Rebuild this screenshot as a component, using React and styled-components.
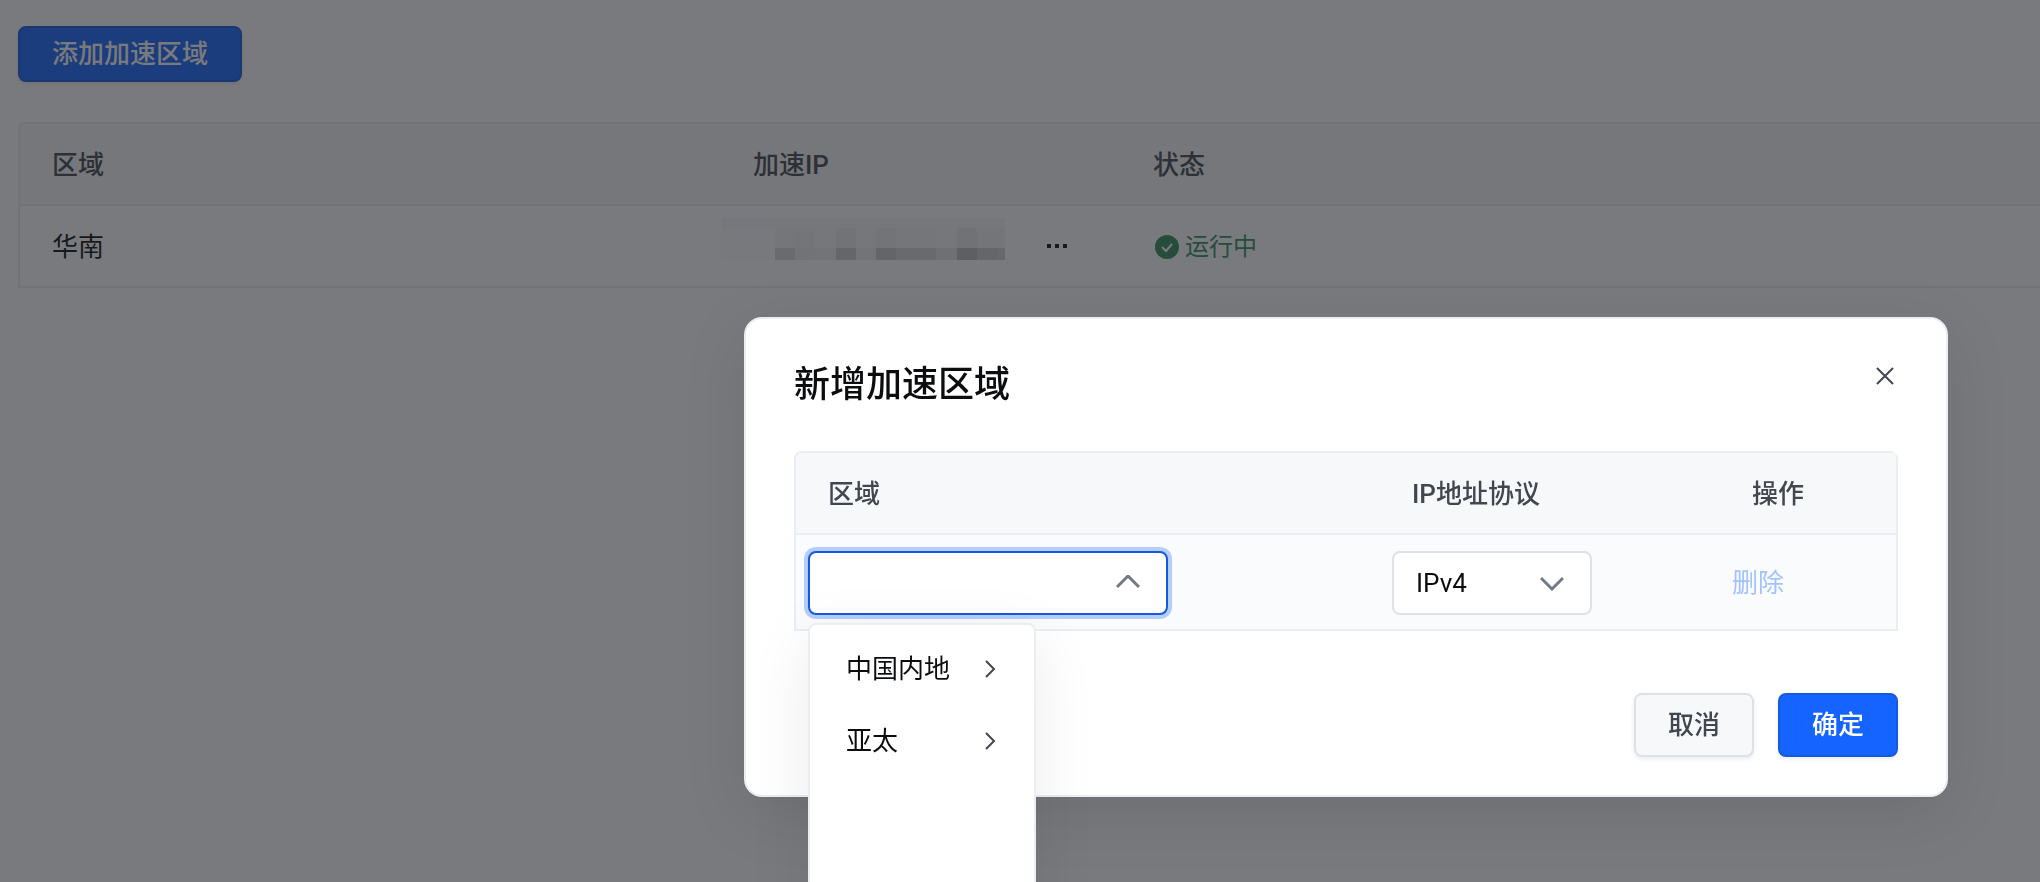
import React from 'react'
import styled, { createGlobalStyle, css } from 'styled-components'

const regions = ['中国内地', '亚太']

// tiles hiding the address, one list of colours for each row
const maskRows = [
  { height: 10, tiles: ['f7f8fc', 'f6f7fb', 'f6f7fb', 'f6f7fb', 'f6f7fb', 'f6f7fb', 'f6f7fb', 'f6f7fb', 'f6f7fb', 'f6f7fb', 'f6f7fb', 'f6f7fb', 'f6f7fb'] },
  { height: 20, tiles: ['fdfdfd', 'f4f4f4', 'f3f3f3', 'f8f8f8', 'eee', 'f8f8f8', 'f0f0f0', 'f5f5f5', 'f5f5f5', 'f7f7f7', 'ebebeb', 'f3f3f3', 'f3f3f3'] },
  { height: 12, tiles: ['fdfdfd', 'dadada', 'ededed', 'efefef', 'cecece', 'f0f0f0', 'cacaca', 'd8d8d8', 'd8d8d8', 'e6e6e6', 'bcbcbc', 'cecece', 'd2d2d2'] }
]

export default function App () {
  const [modal, setModal] = React.useState(true)
  return (
    <>
      <GlobalStyle />
      <Page>
        <Button $primary $small onClick={() => setModal(true)}>
          添加加速区域
        </Button>
        <RegionTable />
      </Page>
      {modal && <AddRegion onClose={() => setModal(false)} />}
    </>
  )
}

function RegionTable () {
  return (
    <Table $open>
      <colgroup>
        <Col $width={701} />
        <Col $width={400} />
        <Col />
      </colgroup>
      <thead>
        <tr>
          <Th>区域</Th>
          <Th>加速IP</Th>
          <Th>状态</Th>
        </tr>
      </thead>
      <tbody>
        <tr>
          <Td>华南</Td>
          <Td $flush>
            <Address>
              <Mask />
              <More aria-label='更多'>
                <Dots />
              </More>
            </Address>
          </Td>
          <Td>
            <Status>
              <CheckIcon />
              运行中
            </Status>
          </Td>
        </tr>
      </tbody>
    </Table>
  )
}

function Mask () {
  return (
    <MaskBox>
      {maskRows.map((row, i) => (
        <MaskRow key={i} $height={row.height}>
          {row.tiles.map((color, j) => (
            <Tile key={j} $color={color} />
          ))}
        </MaskRow>
      ))}
    </MaskBox>
  )
}

function AddRegion ({ onClose }) {
  const [open, setOpen] = React.useState(true)
  const [region, setRegion] = React.useState('')
  const toggle = e => {
    e.preventDefault()
    setOpen(!open)
  }
  const pick = name => {
    setRegion(name)
    setOpen(false)
  }
  return (
    <Overlay>
      <Modal role='dialog' aria-labelledby='modal-title'>
        <Header>
          <Title id='modal-title'>新增加速区域</Title>
          <Close aria-label='关闭' onClick={onClose}>
            <CloseIcon />
          </Close>
        </Header>
        <Table>
          <colgroup>
            <Col />
            <Col $width={340} />
            <Col $width={176} />
          </colgroup>
          <thead>
            <tr>
              <Th>区域</Th>
              <Th>IP地址协议</Th>
              <Th>操作</Th>
            </tr>
          </thead>
          <tbody>
            <tr>
              <Td $control>
                <Field $width={360}>
                  <Select
                    aria-label='区域'
                    $open={open}
                    value={region}
                    onMouseDown={toggle}
                    onChange={e => pick(e.target.value)}
                  >
                    <option value='' />
                    {regions.map(name => (
                      <option key={name}>{name}</option>
                    ))}
                  </Select>
                  <Chevron $up={open} />
                  {open && (
                    <Menu role='menu'>
                      {regions.map(name => (
                        <MenuItem
                          key={name}
                          role='menuitem'
                          onClick={() => pick(name)}
                        >
                          {name}
                          <RightIcon />
                        </MenuItem>
                      ))}
                    </Menu>
                  )}
                </Field>
              </Td>
              <Td $control>
                <Field $width={200}>
                  <Select aria-label='IP地址协议' defaultValue='IPv4'>
                    <option>IPv4</option>
                    <option>IPv6</option>
                  </Select>
                  <Chevron />
                </Field>
              </Td>
              <Td $control>
                <TextButton disabled>删除</TextButton>
              </Td>
            </tr>
          </tbody>
        </Table>
        <Footer>
          <Button onClick={onClose}>取消</Button>
          <Button $primary onClick={onClose}>
            确定
          </Button>
        </Footer>
      </Modal>
    </Overlay>
  )
}

const CheckIcon = () => (
  <svg width='24' height='24' viewBox='0 0 24 24' fill='none'>
    <circle cx='12' cy='12' r='12' fill='#308f5a' />
    <path d='M7 12l4 4 6-7' stroke='#fff' strokeWidth='2' />
  </svg>
)

const CloseIcon = () => (
  <svg width='18' height='18' viewBox='0 0 18 18' stroke='#42464e'>
    <path d='M1 1l16 16M17 1L1 17' strokeWidth='2' />
  </svg>
)

const RightIcon = () => (
  <svg width='12' height='18' viewBox='0 0 12 18' fill='none' stroke='#42464e'>
    <path d='M2 1l8 8-8 8' strokeWidth='2' />
  </svg>
)

const Dots = () => (
  <svg width='20' height='4' viewBox='0 0 20 4' fill='#0c0d0e'>
    <path d='M0 0h4v4H0zM8 0h4v4H8zM16 0h4v4h-4z' />
  </svg>
)

const Chevron = ({ $up }) => (
  <Arrow width='24' height='16' viewBox='0 0 24 16' fill='none'>
    <path
      d={$up ? 'M1 12L12 1l11 11' : 'M1 3l11 11L23 3'}
      stroke='#737a87'
      strokeWidth='3'
    />
  </Arrow>
)

const GlobalStyle = createGlobalStyle`
  * {
    box-sizing: border-box;
  }
  body {
    margin: 0;
    overflow: hidden;
    background: #fff;
  }
  body, button, select {
    font-family: Roboto, "Noto Sans CJK SC", sans-serif;
    font-size: 26px;
    line-height: 40px;
    color: #0c0d0e;
  }
`

const Page = styled.main`
  display: flex;
  flex-direction: column;
  align-items: flex-start;
  gap: 40px;
  padding: 26px 0 0 18px;
`

const Button = styled.button`
  height: ${p => (p.$small ? 56 : 64)}px;
  padding: 0 32px;
  border: 2px solid #dde2e9;
  border-radius: 8px;
  background: #f6f8fa;
  color: #42464e;
  font-weight: 500;
  box-shadow: 0 2px 4px rgba(0, 0, 0, 0.08);
  cursor: pointer;
  ${p =>
    p.$primary &&
    css`
      border-color: #1759dd;
      background: #1664ff;
      color: #fff;
    `}
`

const Table = styled.table`
  width: 100%;
  table-layout: fixed;
  border: 2px solid #eaedf1;
  border-radius: 8px 8px 0 0;
  border-spacing: 0;
  ${p =>
    p.$open &&
    css`
      border-right: 0;
      border-top-right-radius: 0;
    `}
`

const Col = styled.col`
  width: ${p => (p.$width ? p.$width + 'px' : 'auto')};
`

const Th = styled.th`
  height: 82px;
  padding: 2px 32px 0;
  border-bottom: 2px solid #eaedf1;
  background: #f6f8fa;
  color: #42464e;
  font-weight: 500;
  text-align: left;
  &:first-child {
    border-top-left-radius: 6px;
  }
`

const Td = styled.td`
  height: 80px;
  padding: 2px 32px 0;
  ${p =>
    p.$flush &&
    css`
      padding: 0;
    `}
  ${p =>
    p.$control &&
    css`
      height: 94px;
      padding: 2px 12px 0;
      background: #fafbfd;
    `}
`

const Address = styled.div`
  display: flex;
  align-items: center;
  gap: 32px;
`

const MaskBox = styled.div`
  flex: none;
  width: 284px;
  margin-bottom: 14px;
`

const MaskRow = styled.div`
  display: grid;
  grid-template-columns: 54px repeat(11, 1fr) 8px;
  height: ${p => p.$height}px;
`

const Tile = styled.span`
  background: #${p => p.$color};
`

const More = styled.button`
  display: flex;
  padding: 10px;
  border: 0;
  background: none;
  cursor: pointer;
`

const Status = styled.div`
  display: flex;
  align-items: center;
  gap: 6px;
  padding-left: 2px;
  font-size: 24px;
  color: #308f5a;
`

const Overlay = styled.div`
  position: fixed;
  inset: 0;
  display: flex;
  align-items: flex-start;
  padding: 317px 92px 0 744px;
  overflow: hidden;
  background: rgba(31, 33, 38, 0.6);
`

const Modal = styled.section`
  flex: 1;
  padding: 38px 48px;
  border: 2px solid #eaedf1;
  border-radius: 18px;
  background: #fff;
  box-shadow: 0 16px 64px rgba(0, 0, 0, 0.1);
`

const Header = styled.header`
  display: flex;
  justify-content: space-between;
  align-items: flex-start;
  margin-bottom: 38px;
`

const Title = styled.h2`
  margin: 0;
  font-size: 36px;
  font-weight: 500;
  line-height: 56px;
`

const Close = styled.button`
  display: flex;
  padding: 10px 4px;
  border: 0;
  background: none;
  cursor: pointer;
`

const Field = styled.div`
  position: relative;
  width: ${p => p.$width}px;
`

const Select = styled.select`
  display: block;
  width: 100%;
  height: 64px;
  padding: 0 22px;
  border: 2px solid #dde2e9;
  border-radius: 8px;
  outline: 0;
  background: #fff;
  appearance: none;
  ${p =>
    p.$open &&
    css`
      border-color: #1759dd;
      box-shadow: 0 0 0 4px #b4cdff;
    `}
`

const Arrow = styled.svg`
  position: absolute;
  top: 24px;
  right: 28px;
  pointer-events: none;
`

const Menu = styled.div`
  position: absolute;
  top: 72px;
  left: 0;
  width: 228px;
  height: 400px;
  padding: 8px 0;
  border: 2px solid #eaedf1;
  border-radius: 8px;
  background: #fff;
  box-shadow: 0 16px 64px rgba(0, 0, 0, 0.08);
`

const MenuItem = styled.button`
  display: flex;
  justify-content: space-between;
  align-items: center;
  width: 100%;
  height: 72px;
  padding: 0 38px 0 36px;
  border: 0;
  background: none;
  cursor: pointer;
`

const TextButton = styled.button`
  padding: 0;
  border: 0;
  background: none;
  color: #a2c3ff;
`

const Footer = styled.footer`
  display: flex;
  justify-content: flex-end;
  gap: 24px;
  margin-top: 62px;
`
